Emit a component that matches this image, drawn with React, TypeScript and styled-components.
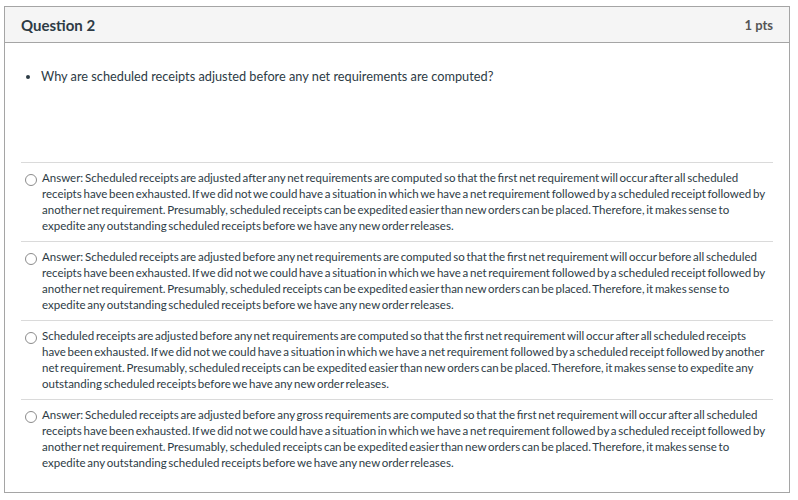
import React from "react";
import styled, { createGlobalStyle } from "styled-components";

const GlobalStyle = createGlobalStyle`
  html, body {
    margin: 0;
    padding: 0;
    background: #ffffff;
    font-family: Lato, "Liberation Sans", sans-serif;
    color: #2d3b45;
  }
`;

const Page = styled.div`
  padding: 6px 8px 7px 4px;
`;

const Card = styled.div`
  border: 1px solid #a5a5a5;
  background: #fff;
  height: 487px;
  box-sizing: border-box;
  display: flex;
  flex-direction: column;
`;

const Header = styled.div`
  display: flex;
  align-items: center;
  justify-content: space-between;
  height: 35px;
  padding: 0 16px 0 16px;
  background: #f5f5f5;
  border-bottom: 1px solid #a5a5a5;
`;

const Title = styled.h2`
  margin: 0;
  font-size: 15px;
  font-weight: 700;
  color: #2d3b45;
`;

const Points = styled.span`
  font-size: 13px;
  font-weight: 700;
  color: #555;
`;

const Body = styled.div`
  padding: 24px 16px 0 16px;
`;

const Prompt = styled.ul`
  margin: 0;
  padding: 0 0 0 20px;
  height: 95px;
  font-size: 12.75px;
  line-height: 18px;
  color: #2d3b45;
`;

const Answers = styled.div`
  display: flex;
  flex-direction: column;
`;

const Answer = styled.label`
  display: flex;
  align-items: flex-start;
  gap: 5px;
  border-top: 1px solid #dadada;
  padding: 7px 8px 6px 4px;
  min-height: 65px;
`;

const Radio = styled.span`
  flex: none;
  width: 10px;
  height: 10px;
  margin-top: 4px;
  border: 1px solid #8c8c8c;
  border-radius: 50%;
  background: #fff;
`;

const AnswerText = styled.span`
  font-size: 11.5px;
  line-height: 16px;
  word-spacing: -1.2px;
  color: #2d3b45;
`;

const answers = [
  "Answer: Scheduled receipts are adjusted after any net requirements are computed so that the first net requirement will occur after all scheduled receipts have been exhausted. If we did not we could have a situation in which we have a net requirement followed by a scheduled receipt followed by another net requirement. Presumably, scheduled receipts can be expedited easier than new orders can be placed. Therefore, it makes sense to expedite any outstanding scheduled receipts before we have any new order releases.",
  "Answer: Scheduled receipts are adjusted before any net requirements are computed so that the first net requirement will occur before all scheduled receipts have been exhausted. If we did not we could have a situation in which we have a net requirement followed by a scheduled receipt followed by another net requirement. Presumably, scheduled receipts can be expedited easier than new orders can be placed. Therefore, it makes sense to expedite any outstanding scheduled receipts before we have any new order releases.",
  "Scheduled receipts are adjusted before any net requirements are computed so that the first net requirement will occur after all scheduled receipts have been exhausted. If we did not we could have a situation in which we have a net requirement followed by a scheduled receipt followed by another net requirement. Presumably, scheduled receipts can be expedited easier than new orders can be placed. Therefore, it makes sense to expedite any outstanding scheduled receipts before we have any new order releases.",
  "Answer: Scheduled receipts are adjusted before any gross requirements are computed so that the first net requirement will occur after all scheduled receipts have been exhausted. If we did not we could have a situation in which we have a net requirement followed by a scheduled receipt followed by another net requirement. Presumably, scheduled receipts can be expedited easier than new orders can be placed. Therefore, it makes sense to expedite any outstanding scheduled receipts before we have any new order releases.",
];

export default function App() {
  return (
    <>
      <GlobalStyle />
      <Page>
        <Card>
          <Header>
            <Title>Question 2</Title>
            <Points>1 pts</Points>
          </Header>
          <Body>
            <Prompt>
              <li>Why are scheduled receipts adjusted before any net requirements are computed?</li>
            </Prompt>
            <Answers>
              {answers.map((a, i) => (
                <Answer key={i}>
                  <Radio />
                  <AnswerText>{a}</AnswerText>
                </Answer>
              ))}
            </Answers>
          </Body>
        </Card>
      </Page>
    </>
  );
}
